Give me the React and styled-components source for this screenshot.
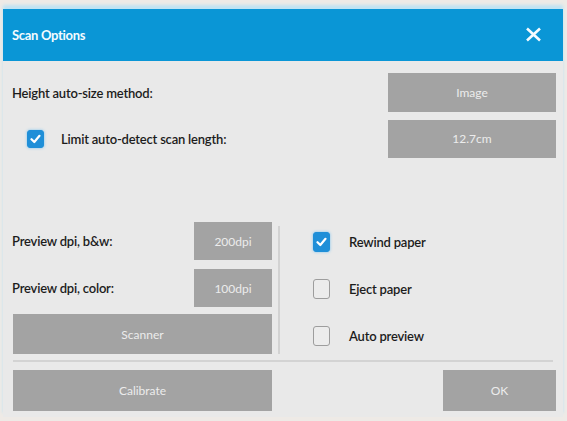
import React from "react";
import styled, { createGlobalStyle } from "styled-components";

const Global = createGlobalStyle`
  html, body { margin: 0; padding: 0; }
  body {
    background: #eeeae6;
    font-family: Lato, "Liberation Sans", sans-serif;
    width: 567px;
    height: 421px;
    overflow: hidden;
  }
`;

const Dialog = styled.div`
  margin: 9px 4px 0 3px;
  height: 408px;
  background: #e9e9e9;
  box-shadow: 0 -4px 3px #bfe3f3;
  display: flex;
  flex-direction: column;
`;

const TitleBar = styled.div`
  height: 52px;
  background: #0a96d6;
  display: flex;
  align-items: center;
  justify-content: space-between;
  padding: 0 21px 0 9px;
  color: #f4fbff;
`;

const Title = styled.span`
  font-size: 13px;
  font-weight: 700;
  letter-spacing: -0.3px;
`;

const CloseIcon = styled.svg`
  display: block;
  margin-top: -1px;
`;

const Body = styled.div`
  flex: 1;
  display: flex;
  flex-direction: column;
  padding: 12px 7px 0 10px;
`;

const TopRows = styled.div`
  display: flex;
  flex-direction: column;
  gap: 7px;
`;

const Row = styled.div`
  display: flex;
  align-items: center;
  justify-content: space-between;
  height: ${(p) => p.h || 39}px;
  padding-left: ${(p) => p.indent || 0}px;
`;

const Label = styled.span`
  font-size: 13px;
  font-weight: 600;
  color: #1c1c1c;
  letter-spacing: -0.2px;
  margin-left: -1px;
`;

const CheckLabel = styled.label`
  display: flex;
  align-items: center;
  gap: ${(p) => p.gap || 18}px;
`;

const GrayButton = styled.div`
  width: ${(p) => p.w}px;
  height: ${(p) => p.h || 39}px;
  background: #a3a3a3;
  color: #ececec;
  font-size: 12px;
  display: flex;
  align-items: center;
  justify-content: center;
  flex-shrink: 0;
`;

const Box = styled.span`
  width: 17px;
  height: ${(p) => p.h || 18}px;
  border-radius: 3px;
  box-sizing: border-box;
  display: inline-flex;
  align-items: center;
  justify-content: center;
  flex-shrink: 0;
  background: ${(p) => (p.checked ? "#1f8fd8" : "#ececec")};
  border: 1px solid ${(p) => (p.checked ? "#1f8fd8" : "#9d9d9d")};
  box-shadow: ${(p) => (p.checked ? "0 0 3px #7cc3ef" : "none")};
`;

const Lower = styled.div`
  margin-top: 64px;
  display: grid;
  grid-template-columns: 259px 41px 1fr;
`;

const LeftCol = styled.div`
  display: flex;
  flex-direction: column;
  gap: 9px;
`;

const DpiRow = styled.div`
  display: flex;
  align-items: center;
  justify-content: space-between;
`;

const ScannerSlot = styled.div`
  margin-top: -2px;
`;

const Divider = styled.div`
  width: 2px;
  margin: 4px 0 0 6px;
  height: 128px;
  background: #d2d2d2;
`;

const RightCol = styled.div`
  display: flex;
  flex-direction: column;
  gap: 27px;
  padding-top: 10px;
`;

const HRule = styled.div`
  height: 2px;
  background: #d3d3d3;
  margin: 6px 3px 8px 0;
`;

const Footer = styled.div`
  display: flex;
  justify-content: space-between;
`;

const Check = () => (
  <svg width="11" height="10" viewBox="0 0 11 10">
    <path d="M1.5 5.2 L4.3 8 L9.5 1.8" fill="none" stroke="#fff" strokeWidth="2.2" strokeLinecap="round" strokeLinejoin="round" />
  </svg>
);

const CheckItem = ({ checked, children }) => (
  <CheckLabel gap={20}>
    <Box checked={checked} h={20}>{checked && <Check />}</Box>
    <Label>{children}</Label>
  </CheckLabel>
);

export default function App() {
  return (
    <>
      <Global />
      <Dialog>
        <TitleBar>
          <Title>Scan Options</Title>
          <CloseIcon width="17" height="15" viewBox="0 0 17 15">
            <path d="M2 1.5 L15 13.5 M15 1.5 L2 13.5" stroke="#f4fbff" strokeWidth="2.6" strokeLinecap="butt" fill="none" />
          </CloseIcon>
        </TitleBar>
        <Body>
          <TopRows>
            <Row>
              <Label>Height auto-size method:</Label>
              <GrayButton w={168}>Image</GrayButton>
            </Row>
            <Row indent={14}>
              <CheckLabel gap={18}>
                <Box checked>
                  <Check />
                </Box>
                <Label>Limit auto-detect scan length:</Label>
              </CheckLabel>
              <GrayButton w={168} h={38}>12.7cm</GrayButton>
            </Row>
          </TopRows>
          <Lower>
            <LeftCol>
              <DpiRow>
                <Label>Preview dpi, b&amp;w:</Label>
                <GrayButton w={78} h={38}>200dpi</GrayButton>
              </DpiRow>
              <DpiRow>
                <Label>Preview dpi, color:</Label>
                <GrayButton w={78} h={38}>100dpi</GrayButton>
              </DpiRow>
              <ScannerSlot>
                <GrayButton w={259} h={40}>Scanner</GrayButton>
              </ScannerSlot>
            </LeftCol>
            <Divider />
            <RightCol>
              <CheckItem checked>Rewind paper</CheckItem>
              <CheckItem>Eject paper</CheckItem>
              <CheckItem>Auto preview</CheckItem>
            </RightCol>
          </Lower>
          <HRule />
          <Footer>
            <GrayButton w={259} h={41}>Calibrate</GrayButton>
            <GrayButton w={113} h={41}>OK</GrayButton>
          </Footer>
        </Body>
      </Dialog>
    </>
  );
}
